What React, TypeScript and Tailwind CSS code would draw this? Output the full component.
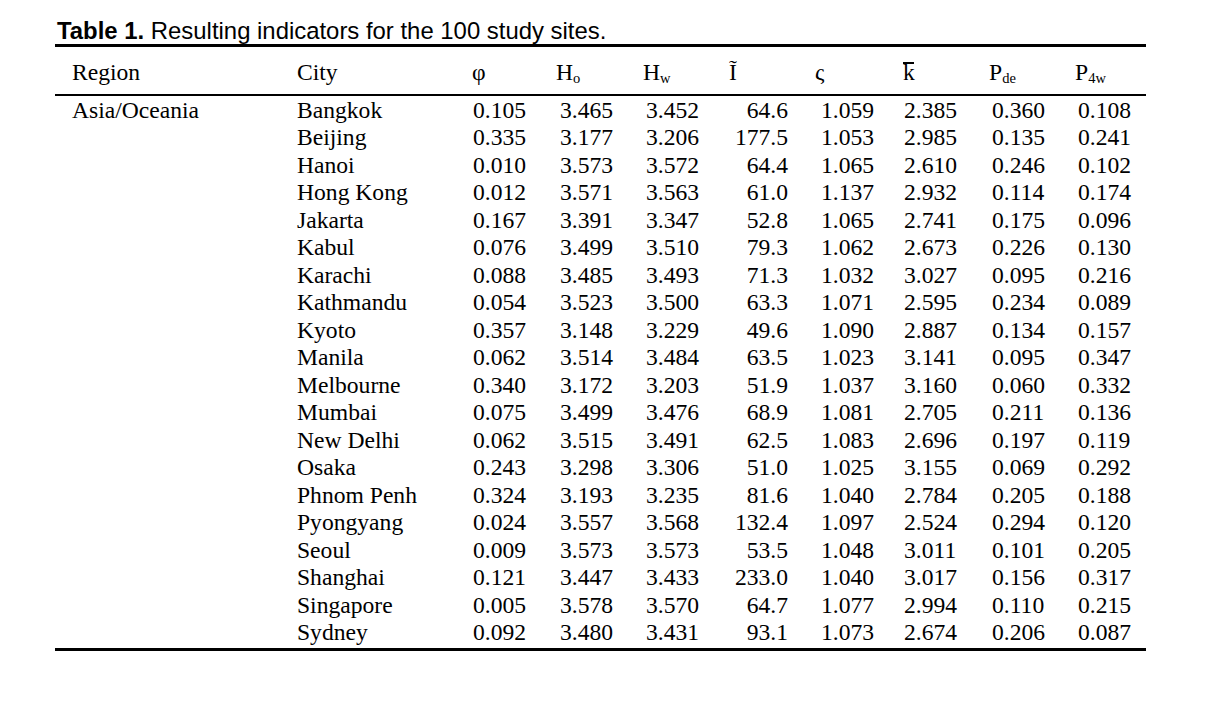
const rows: [string, string, string, string, string, string, string, string, string][] = [
  ['Bangkok', '0.105', '3.465', '3.452', '64.6', '1.059', '2.385', '0.360', '0.108'],
  ['Beijing', '0.335', '3.177', '3.206', '177.5', '1.053', '2.985', '0.135', '0.241'],
  ['Hanoi', '0.010', '3.573', '3.572', '64.4', '1.065', '2.610', '0.246', '0.102'],
  ['Hong Kong', '0.012', '3.571', '3.563', '61.0', '1.137', '2.932', '0.114', '0.174'],
  ['Jakarta', '0.167', '3.391', '3.347', '52.8', '1.065', '2.741', '0.175', '0.096'],
  ['Kabul', '0.076', '3.499', '3.510', '79.3', '1.062', '2.673', '0.226', '0.130'],
  ['Karachi', '0.088', '3.485', '3.493', '71.3', '1.032', '3.027', '0.095', '0.216'],
  ['Kathmandu', '0.054', '3.523', '3.500', '63.3', '1.071', '2.595', '0.234', '0.089'],
  ['Kyoto', '0.357', '3.148', '3.229', '49.6', '1.090', '2.887', '0.134', '0.157'],
  ['Manila', '0.062', '3.514', '3.484', '63.5', '1.023', '3.141', '0.095', '0.347'],
  ['Melbourne', '0.340', '3.172', '3.203', '51.9', '1.037', '3.160', '0.060', '0.332'],
  ['Mumbai', '0.075', '3.499', '3.476', '68.9', '1.081', '2.705', '0.211', '0.136'],
  ['New Delhi', '0.062', '3.515', '3.491', '62.5', '1.083', '2.696', '0.197', '0.119'],
  ['Osaka', '0.243', '3.298', '3.306', '51.0', '1.025', '3.155', '0.069', '0.292'],
  ['Phnom Penh', '0.324', '3.193', '3.235', '81.6', '1.040', '2.784', '0.205', '0.188'],
  ['Pyongyang', '0.024', '3.557', '3.568', '132.4', '1.097', '2.524', '0.294', '0.120'],
  ['Seoul', '0.009', '3.573', '3.573', '53.5', '1.048', '3.011', '0.101', '0.205'],
  ['Shanghai', '0.121', '3.447', '3.433', '233.0', '1.040', '3.017', '0.156', '0.317'],
  ['Singapore', '0.005', '3.578', '3.570', '64.7', '1.077', '2.994', '0.110', '0.215'],
  ['Sydney', '0.092', '3.480', '3.431', '93.1', '1.073', '2.674', '0.206', '0.087'],
];

const grid =
  'grid grid-cols-[225px_176px_87px_86px_80px_62px_116px_88px_86px_1fr] pl-[17px]';

function Sub({ children }: { children: string }) {
  return <sub className="text-[14.5px] bottom-[-3px]">{children}</sub>;
}

export default function App() {
  return (
    <div className="min-h-screen bg-white pt-[17px] pl-[55px] text-black">
      <div className="w-[1091px]">
        {/* Caption */}
        <p className="pl-[2px] text-[23.9px] leading-[27px] font-['Liberation_Sans',Arial,sans-serif]">
          <span className="font-bold">Table 1.</span> Resulting indicators for the 100 study sites.
        </p>

        <div className="border-t-[3px] border-b-[3px] border-black font-['Liberation_Serif','Times_New_Roman',serif] text-[23.6px] leading-[27.5px]">
          {/* Header */}
          <div className={`${grid} pt-[12px] pb-[7px] border-b-2 border-black`}>
            <div>Region</div>
            <div>City</div>
            <div className="ml-[-1px]">φ</div>
            <div className="ml-[-4px]">
              H<Sub>o</Sub>
            </div>
            <div className="ml-[-3px]">
              H<Sub>w</Sub>
            </div>
            <div className="pl-[3px]">Ĩ</div>
            <div className="pl-[27px]">ς</div>
            <div className="ml-[-1px]">
              <span className="relative inline-block">
                k
                <span className="absolute left-0 right-[1px] top-[3px] h-[1.5px] bg-black" />
              </span>
            </div>
            <div className="ml-[-3px]">
              P<Sub>de</Sub>
            </div>
            <div className="ml-[-3px]">
              P<Sub>4w</Sub>
            </div>
          </div>

          {/* Body */}
          <div className="pt-[1px] pb-[1px]">
            {rows.map((r, i) => (
              <div key={r[0]} className={grid}>
                <div>{i === 0 ? 'Asia/Oceania' : ''}</div>
                <div>{r[0]}</div>
                <div>{r[1]}</div>
                <div>{r[2]}</div>
                <div>{r[3]}</div>
                <div className="text-right">{r[4]}</div>
                <div className="pl-[33px]">{r[5]}</div>
                <div>{r[6]}</div>
                <div>{r[7]}</div>
                <div>{r[8]}</div>
              </div>
            ))}
          </div>
        </div>
      </div>
    </div>
  );
}
